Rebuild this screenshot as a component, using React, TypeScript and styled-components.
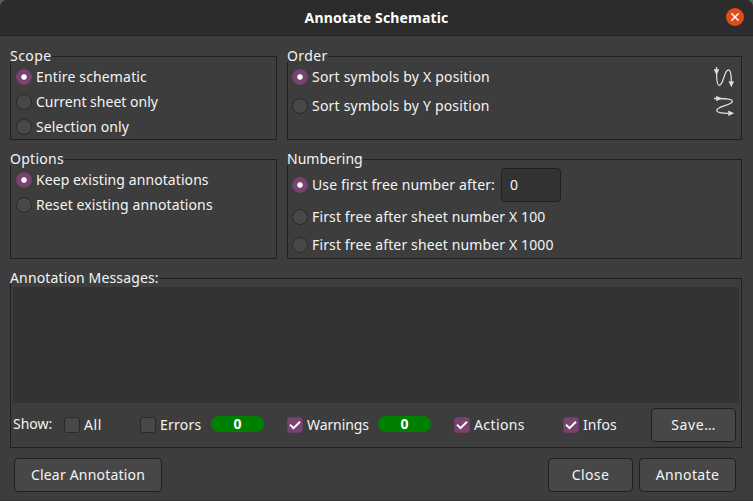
import React from 'react';
import styled, { createGlobalStyle, css } from 'styled-components';

const GlobalStyle = createGlobalStyle`
  *, *::before, *::after { box-sizing: border-box; }
  html { background: #5d5d5d; }
  body { margin: 0; overflow: hidden; }
`;

const Dialog = styled.div`
  width: 753px;
  height: 501px;
  display: flex;
  flex-direction: column;
  overflow: hidden;
  background: #3d3d3d;
  border-radius: 7px 7px 0 0;
  border-bottom: 1px solid #353535;
  color: #f4f4f4;
  font: 14px/18px 'Noto Sans', sans-serif;
`;

const TitleBar = styled.header`
  flex: none;
  height: 36px;
  display: grid;
  grid-template-columns: 36px 1fr 36px;
  align-items: center;
  justify-items: center;
  background: linear-gradient(#2b2b2b, #2d2d2d);
  border-bottom: 1px solid #222222;
`;

const Title = styled.h1`
  grid-column: 2;
  margin: 1px 0 0;
  font-size: 14px;
  font-weight: 700;
  letter-spacing: 0.15px;
  color: #ffffff;
`;

const CloseIconButton = styled.button`
  width: 18px;
  height: 18px;
  margin-top: -1px;
  padding: 0;
  border: 0;
  border-radius: 50%;
  background: #e24c1a;
  display: grid;
  place-items: center;
`;

const Text = styled.span<{ $tracking?: number }>`
  white-space: pre;
  letter-spacing: ${(p) => p.$tracking ?? 0}px;
`;

const Body = styled.main`
  flex: 1;
  padding: 20px 11px 8px 10px;
  display: flex;
  flex-direction: column;
`;

const Panels = styled.div`
  display: grid;
  grid-template-columns: 267px 455px;
  grid-template-rows: 84px 100px;
  gap: 19px 10px;
`;

const Group = styled.section`
  display: flex;
  flex-direction: column;
  border: 1px solid #202020;
`;

const Legend = styled.div<{ $tracking?: number }>`
  width: fit-content;
  height: 12px;
  margin: -7px 0 0 -1px;
  line-height: 12px;
  background: #3d3d3d;
  white-space: pre;
  letter-spacing: ${(p) => p.$tracking ?? 0}px;
`;

const Choices = styled.div<{ $gap: number; $top: number; $left?: number }>`
  display: flex;
  flex-direction: column;
  gap: ${(p) => p.$gap}px;
  padding: ${(p) => p.$top}px 6px 0 ${(p) => p.$left ?? 5}px;
`;

const ChoiceRow = styled.div<{ $height?: number }>`
  height: ${(p) => p.$height ?? 16}px;
  display: flex;
  align-items: center;
  justify-content: space-between;
`;

const OptionLabel = styled.label`
  display: flex;
  align-items: center;
  gap: 4px;
`;

const RadioDot = styled.span<{ $checked?: boolean }>`
  flex: none;
  width: 16px;
  height: 16px;
  border-radius: 50%;
  border: 1px solid #292929;
  background: #484848;
  ${(p) =>
    p.$checked &&
    css`
      border-color: #75416d;
      background: radial-gradient(circle, #ffffff 2.3px, #79426f 3.2px);
    `}
`;

const CheckSquare = styled.span<{ $checked?: boolean }>`
  flex: none;
  width: 16px;
  height: 16px;
  border-radius: 3px;
  border: 1px solid ${(p) => (p.$checked ? '#6d3b66' : '#292929')};
  background: ${(p) => (p.$checked ? '#79426f' : '#484848')};
  display: grid;
  place-items: center;
`;

const NumberField = styled.div`
  width: 60px;
  height: 34px;
  margin: 0 auto 0 6px;
  padding: 0 8px;
  display: flex;
  align-items: center;
  border: 1px solid #202020;
  border-radius: 4px;
  background: #333333;
`;

const Messages = styled(Group)`
  height: 170px;
  margin-top: 19px;
`;

const MessageLog = styled.div`
  height: 116px;
  margin: 3px 2px 0;
  background: #333333;
`;

const FilterBar = styled.div`
  display: grid;
  grid-template-columns: 51px 76px 71px 76px 91px 76px 109px 88px 85px;
  align-items: center;
  height: 44px;
  padding-left: 2px;
`;

const FilterTitle = styled.span`
  margin-bottom: 2px;
`;

const CountBadge = styled.span`
  width: 53px;
  height: 16px;
  margin-bottom: 2px;
  border-radius: 8px;
  background: #008000;
  color: #ffffff;
  font-weight: 700;
  line-height: 16px;
  text-align: center;
`;

const Button = styled.button<{ $width: number }>`
  width: ${(p) => p.$width}px;
  height: 34px;
  padding: 0;
  border: 1px solid #202020;
  border-radius: 4px;
  background: #474747;
  color: inherit;
  font: inherit;
`;

const Footer = styled.footer`
  display: flex;
  gap: 6px;
  margin-top: 10px;
  padding: 0 6px 0 4px;
`;

const ClearButton = styled(Button)`
  margin-right: auto;
`;

type LabelProps = { text: string; tracking?: number; checked?: boolean };

const Radio = ({ text, tracking, checked }: LabelProps) => (
  <OptionLabel>
    <RadioDot $checked={checked} />
    <Text $tracking={tracking}>{text}</Text>
  </OptionLabel>
);

const Check = ({ text, tracking, checked }: LabelProps) => (
  <OptionLabel>
    <CheckSquare $checked={checked}>
      {checked && (
        <svg width="14" height="14" viewBox="0 0 14 14" fill="none">
          <path d="M2 6.6 5.5 10.1 12 3.8" stroke="#fff" strokeWidth="2" />
        </svg>
      )}
    </CheckSquare>
    <Text $tracking={tracking}>{text}</Text>
  </OptionLabel>
);

const SortByXIcon = () => (
  <svg width="22" height="22" viewBox="0 0 22 22" fill="none">
    <path d="M3.5 1V6C3.6 14 4 19.4 6.2 19.4C10.5 19.4 11 3.8 15.5 3.8C17.8 3.8 18.3 8 18.3 15" stroke="#dedede" strokeWidth="1.3" />
    <path d="M.7 3.2H6.3L3.5 9ZM15.5 15.2H21.1L18.3 21.2Z" fill="#dedede" />
  </svg>
);

const SortByYIcon = () => (
  <svg width="22" height="22" viewBox="0 0 22 22" fill="none">
    <path d="M1 3.5H6C14 3.6 19.4 4 19.4 6.2C19.4 10.5 3.8 11 3.8 15.5C3.8 17.8 8 18.3 15 18.3" stroke="#dedede" strokeWidth="1.3" />
    <path d="M3.2 .7V6.3L9 3.5ZM15.2 15.5V21.1L21.2 18.3Z" fill="#dedede" />
  </svg>
);

export default function App() {
  return (
    <>
      <GlobalStyle />
      <Dialog>
        <TitleBar>
          <Title>Annotate Schematic</Title>
          <CloseIconButton aria-label="Close window">
            <svg width="8" height="8" viewBox="0 0 8 8">
              <path d="M.4 .4 7.6 7.6M7.6 .4 .4 7.6" stroke="#fff" strokeWidth="1.5" />
            </svg>
          </CloseIconButton>
        </TitleBar>
        <Body>
          <Panels>
            <Group>
              <Legend $tracking={0.45}>Scope</Legend>
              <Choices $top={7} $gap={9}>
                <ChoiceRow><Radio text="Entire schematic" tracking={0.16} checked /></ChoiceRow>
                <ChoiceRow><Radio text="Current sheet only" tracking={0.01} /></ChoiceRow>
                <ChoiceRow><Radio text="Selection only" tracking={0.14} /></ChoiceRow>
              </Choices>
            </Group>
            <Group>
              <Legend $tracking={0.4}>Order</Legend>
              <Choices $top={4} $gap={7} $left={4}>
                <ChoiceRow $height={22}><Radio text="Sort symbols by X position" tracking={0.2} checked /><SortByXIcon /></ChoiceRow>
                <ChoiceRow $height={22}><Radio text="Sort symbols by Y position" tracking={0.2} /><SortByYIcon /></ChoiceRow>
              </Choices>
            </Group>
            <Group>
              <Legend $tracking={0.28}>Options</Legend>
              <Choices $top={7} $gap={9}>
                <ChoiceRow><Radio text="Keep existing annotations" tracking={0.08} checked /></ChoiceRow>
                <ChoiceRow><Radio text="Reset existing annotations" tracking={0.11} /></ChoiceRow>
              </Choices>
            </Group>
            <Group>
              <Legend $tracking={0.02}>Numbering</Legend>
              <Choices $top={3} $gap={7} $left={4}>
                <ChoiceRow $height={34}>
                  <Radio text="Use first free number after:" tracking={0.13} checked />
                  <NumberField>0</NumberField>
                </ChoiceRow>
                <ChoiceRow><Radio text="First free after sheet number X 100" tracking={0.13} /></ChoiceRow>
                <ChoiceRow $height={26}><Radio text="First free after sheet number X 1000" tracking={0.13} /></ChoiceRow>
              </Choices>
            </Group>
          </Panels>
          <Messages>
            <Legend $tracking={0.14}>Annotation Messages:</Legend>
            <MessageLog />
            <FilterBar>
              <FilterTitle>Show:</FilterTitle>
              <Check text="All" tracking={0.6} />
              <Check text="Errors" tracking={0.25} />
              <CountBadge>0</CountBadge>
              <Check text="Warnings" tracking={-0.1} checked />
              <CountBadge>0</CountBadge>
              <Check text="Actions" tracking={0.4} checked />
              <Check text="Infos" tracking={0.1} checked />
              <Button $width={85}><Text $tracking={0.6}>Save…</Text></Button>
            </FilterBar>
          </Messages>
          <Footer>
            <ClearButton $width={148}><Text $tracking={0.2}>Clear Annotation</Text></ClearButton>
            <Button $width={85}><Text $tracking={0.4}>Close</Text></Button>
            <Button $width={97}><Text $tracking={0.35}>Annotate</Text></Button>
          </Footer>
        </Body>
      </Dialog>
    </>
  );
}
